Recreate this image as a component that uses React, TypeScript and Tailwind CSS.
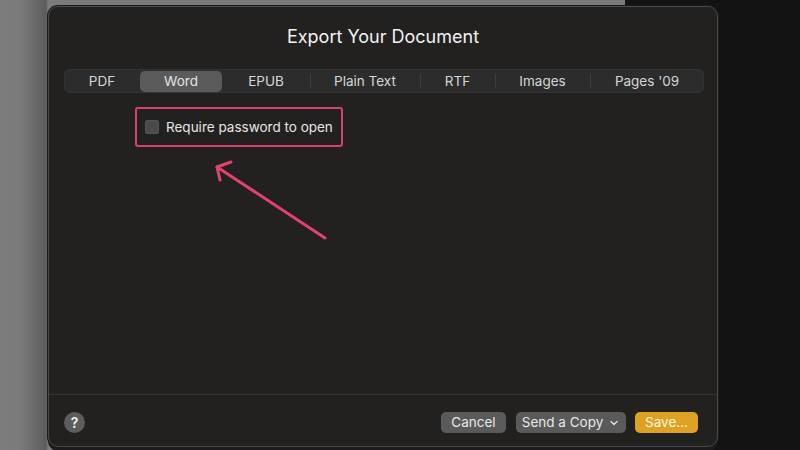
import React from 'react';
import { ChevronDown } from 'lucide-react';

const tabs = [
  { label: 'PDF', w: 'w-[76px]' },
  { label: 'Word', w: 'w-[82px]', active: true },
  { label: 'EPUB', w: 'w-[88px]' },
  { label: 'Plain Text', w: 'w-[110px]' },
  { label: 'RTF', w: 'w-[75px]' },
  { label: 'Images', w: 'w-[95px]' },
  { label: "Pages '09", w: 'w-[114px]' },
];

const SegmentBar = () => (
  <div className="ml-[15px] mt-[20px] flex h-[24px] w-[640px] items-center rounded-[6px] bg-[#2d2c2c] shadow-[inset_0_0_0_1px_#333]">
    {tabs.map((t, i) => {
      const prevActive = i > 0 && tabs[i - 1].active;
      return (
        <div key={t.label} className={`relative flex h-full items-center justify-center ${t.w}`}>
          {i > 0 && !t.active && !prevActive && (
            <span className="absolute left-0 top-[5px] h-[14px] w-px bg-[#3d3d3d]" />
          )}
          {t.active ? (
            <div className="flex h-[21px] w-full items-center justify-center rounded-[5px] bg-[#5a5a5a] text-[#e4e4e4]">
              {t.label}
            </div>
          ) : (
            <span className="text-[#d6d6d6]">{t.label}</span>
          )}
        </div>
      );
    })}
  </div>
);

export default function App() {
  return (
    <div
      className="relative h-[450px] w-[800px] overflow-hidden bg-[linear-gradient(to_right,#7d7d7d_0,#7a7a7a_22px,#5c5c5c_46px,#7b7b7b_48px,#7b7b7b_625px,#131313_625px)] text-[13.5px]"
      style={{ fontFamily: 'Inter, "Open Sans", sans-serif' }}
    >
      <div className="relative ml-[48px] mt-[6px] flex h-[441px] w-[670px] flex-col rounded-[10px] border border-[#4a4a4a] bg-[#222120] shadow-[0_0_0_1px_#1a1a1a,0_4px_0_0_#1c1c1c]">
        <div className="mt-[18px] text-center text-[18px] leading-[24px] text-[#f2f2f2]">Export Your Document</div>
        <SegmentBar />

        <div className="ml-[86px] mt-[14px] flex h-[40px] w-[208px] items-center rounded-[3px] border-[2.5px] border-[#d8416b] pl-[8px]">
          <span className="h-[14px] w-[14px] rounded-[3px] bg-[#4b4b4b] shadow-[inset_0_0_0_1px_#555]" />
          <span className="ml-[7px] text-[#e6e6e6]">Require password to open</span>
        </div>

        <div className="flex-1" />

        <div className="h-px bg-[#343333]" />
        <div className="flex h-[51px] items-center pl-[15px] pr-[19px] pt-[4px]">
          <div className="flex h-[21px] w-[21px] items-center justify-center rounded-full bg-[#5d5d5d] text-[14px] font-semibold text-[#f0f0f0]">
            ?
          </div>
          <div className="flex-1" />
          <div className="flex h-[21px] w-[65px] items-center justify-center rounded-[5px] bg-[#5a5a5a] text-[#e8e8e8]">Cancel</div>
          <div className="ml-[10px] flex h-[21px] w-[110px] items-center justify-center gap-[5px] rounded-[5px] bg-[#5a5a5a] text-[#e8e8e8]">
            Send a Copy
            <ChevronDown size={12} strokeWidth={2.5} />
          </div>
          <div className="ml-[9px] flex h-[21px] w-[63px] items-center justify-center rounded-[5px] bg-[#dfa121] text-[#fff6e0]">Save...</div>
        </div>
      </div>

      <svg className="absolute left-0 top-0" width="800" height="450" viewBox="0 0 800 450" fill="none">
        <g stroke="#e2426c" strokeWidth="3" strokeLinecap="round" strokeLinejoin="round">
          <path d="M325 238 L217 167" />
          <path d="M220 180 L217 167 L231 162" />
        </g>
      </svg>
    </div>
  );
}
